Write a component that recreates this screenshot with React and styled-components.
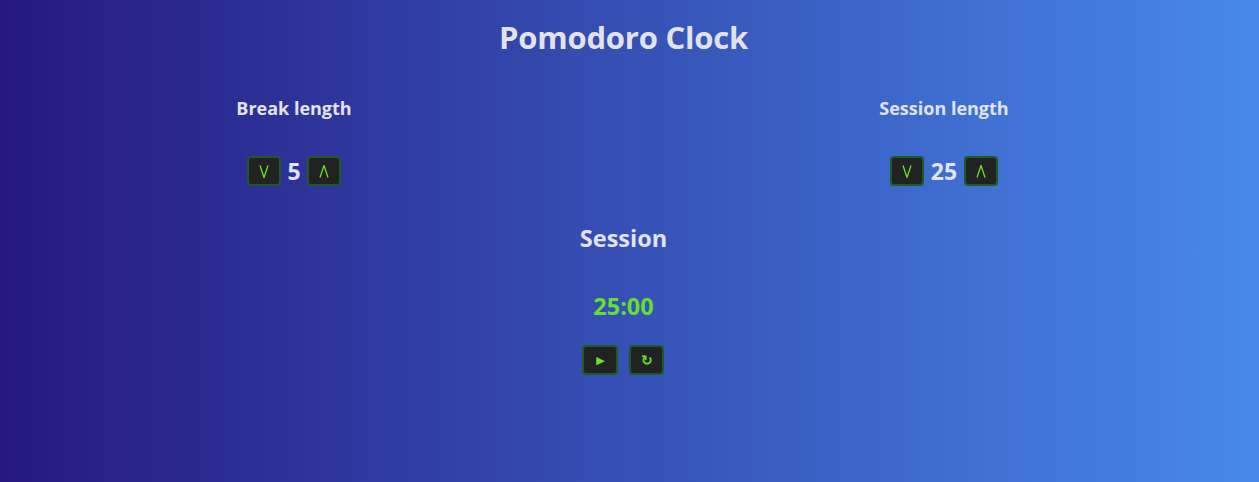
import React, { useState } from 'react';
import styled, { createGlobalStyle } from 'styled-components';

const GlobalStyle = createGlobalStyle`
  html, body {
    margin: 0;
    height: 100%;
  }
  body {
    font-family: "Open Sans", "Noto Sans", "DejaVu Sans", sans-serif;
    color: #e2e2ea;
    background: linear-gradient(to right, #251880, #4789ea);
  }
`;

const Page = styled.div`
  height: 482px;
  box-sizing: border-box;
  padding-right: 12px;
  display: flex;
  flex-direction: column;
  align-items: center;
`;

const Title = styled.h1`
  margin: 17px 0 0;
  font-size: 31px;
  font-weight: 700;
  line-height: 40px;
  letter-spacing: -0.2px;
`;

const Settings = styled.div`
  align-self: stretch;
  display: grid;
  grid-template-columns: 200px 200px;
  justify-content: space-between;
  padding: 0 203px 0 194px;
  margin-top: 40px;
`;

const Setting = styled.div`
  display: flex;
  flex-direction: column;
  align-items: center;
`;

const Label = styled.h3`
  margin: 0;
  font-size: 18px;
  font-weight: 700;
  line-height: 22px;
`;

const Controls = styled.div`
  display: flex;
  align-items: center;
  gap: 6px;
  margin-top: 37px;
`;

const Value = styled.span`
  font-size: 23px;
  font-weight: 700;
  line-height: 28px;
  min-width: ${p => (p.wide ? '28px' : '14px')};
  text-align: center;
`;

const Button = styled.button`
  width: ${p => p.w || 34}px;
  height: 30px;
  padding: 0;
  display: flex;
  align-items: center;
  justify-content: center;
  background: #222222;
  border: 2px solid #1f5a22;
  border-radius: 4px;
  color: #6ae22a;
  font-family: "DejaVu Sans", sans-serif;
  font-size: ${p => p.fs || 15}px;
  font-weight: 700;
  cursor: pointer;
`;

const Timer = styled.div`
  display: flex;
  flex-direction: column;
  align-items: center;
  margin-top: 38px;
`;

const TimerLabel = styled.h2`
  margin: 0;
  font-size: 23.5px;
  font-weight: 700;
  line-height: 28px;
`;

const TimeLeft = styled.div`
  margin-top: 40px;
  font-size: 23.5px;
  font-weight: 700;
  line-height: 28px;
  color: #62e02c;
`;

const TimerControls = styled.div`
  display: flex;
  gap: 11px;
  margin-top: 25px;
`;

const Arrow = ({ up }) => (
  <svg width="10" height="13" viewBox="0 0 10 13">
    <path
      d={up ? 'M1 12.5 L5 0.5 L9 12.5' : 'M1 0.5 L5 12.5 L9 0.5'}
      fill="none"
      stroke="#6ae22a"
      strokeWidth="1.3"
    />
  </svg>
);

const LengthSetting = ({ label, value, onChange }) => (
  <Setting>
    <Label>{label}</Label>
    <Controls>
      <Button onClick={() => onChange(Math.max(1, value - 1))}>
        <Arrow />
      </Button>
      <Value wide={value > 9}>{value}</Value>
      <Button onClick={() => onChange(Math.min(60, value + 1))}>
        <Arrow up />
      </Button>
    </Controls>
  </Setting>
);

export default function App() {
  const [breakLength, setBreakLength] = useState(5);
  const [sessionLength, setSessionLength] = useState(25);

  return (
    <Page>
      <GlobalStyle />
      <Title>Pomodoro Clock</Title>
      <Settings>
        <LengthSetting label="Break length" value={breakLength} onChange={setBreakLength} />
        <LengthSetting label="Session length" value={sessionLength} onChange={setSessionLength} />
      </Settings>
      <Timer>
        <TimerLabel>Session</TimerLabel>
        <TimeLeft>{String(sessionLength).padStart(2, '0')}:00</TimeLeft>
        <TimerControls>
          <Button w={36} fs={11}>▶</Button>
          <Button w={35} fs={14}>↻</Button>
        </TimerControls>
      </Timer>
    </Page>
  );
}
